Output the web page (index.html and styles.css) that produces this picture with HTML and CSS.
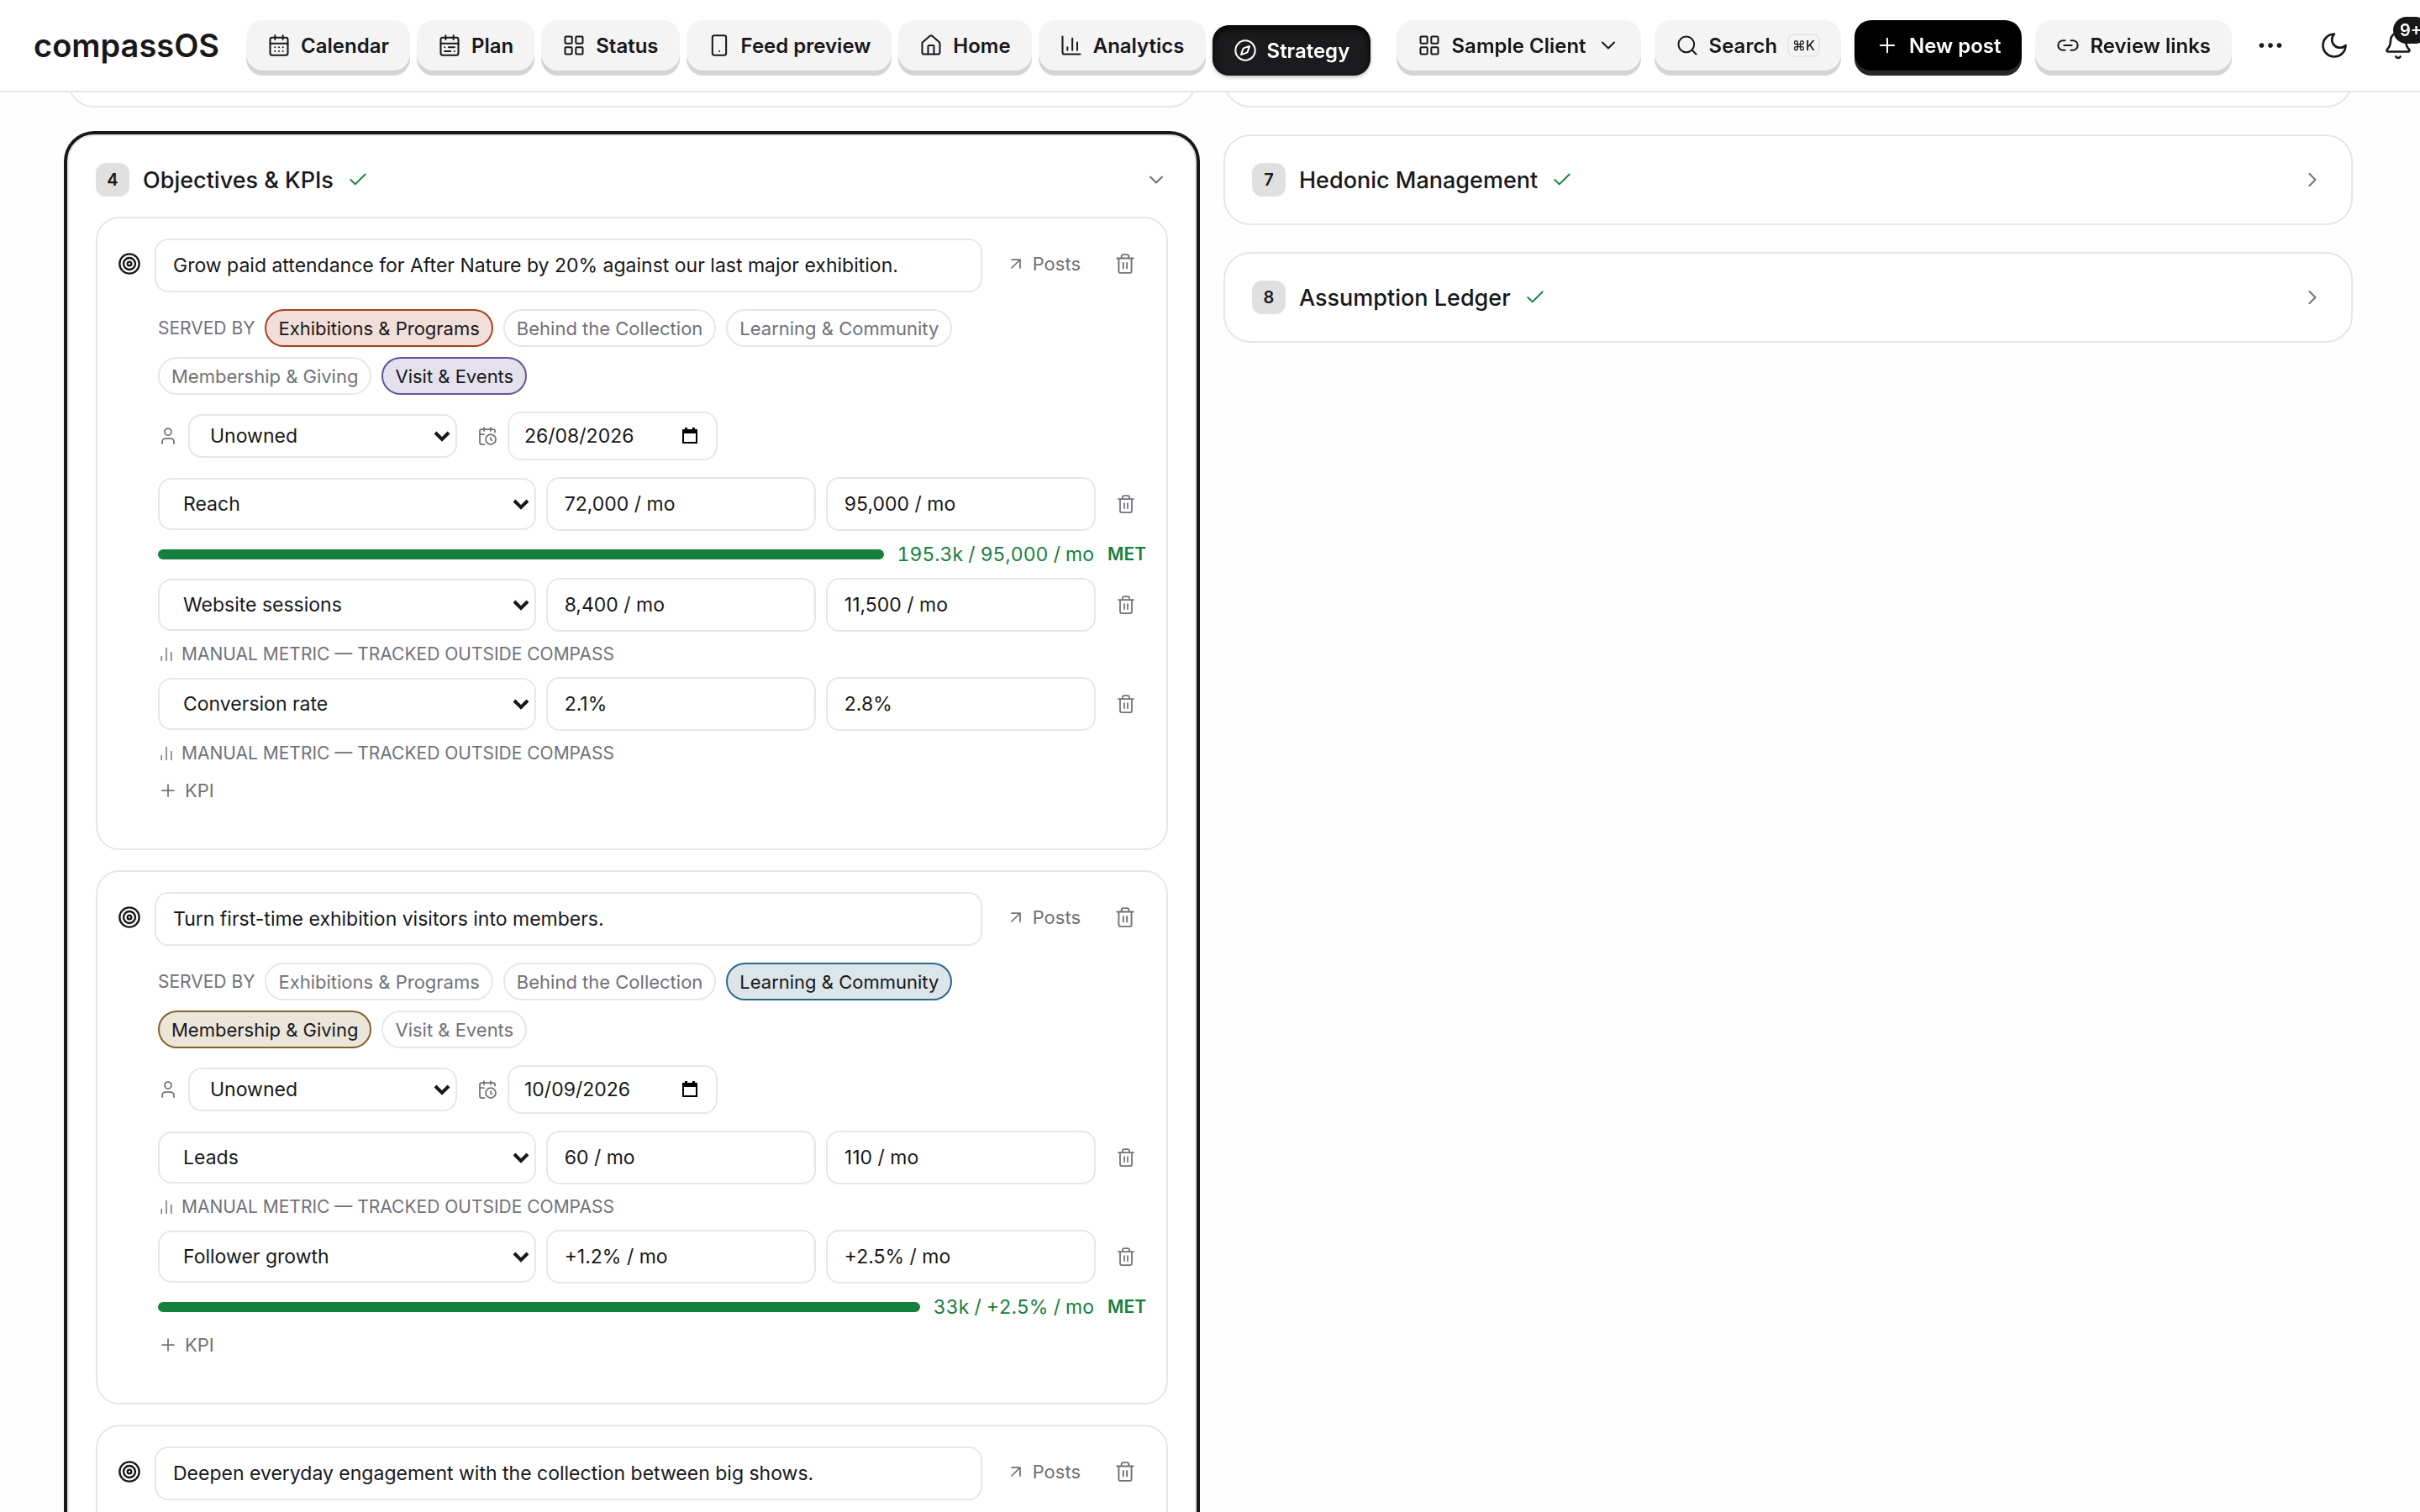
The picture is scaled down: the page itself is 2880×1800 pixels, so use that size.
FILE: index.html
```
<!DOCTYPE html>
<html lang="en">
<head>
  <meta charset="UTF-8" />
  <meta name="viewport" content="width=device-width, initial-scale=1.0"/>
  <title>compassOS - Strategy</title>
  <link rel="stylesheet" href="styles.css">
</head>
<body>
  <!-- icon sprite -->
  <svg class="sprite" aria-hidden="true">
    <symbol id="i-calendar" viewBox="0 0 24 24"><path d="M8 2v4M16 2v4M3 10h18M8 14h.01M12 14h.01M16 14h.01M8 18h.01M12 18h.01M16 18h.01"/><rect x="3" y="4" width="18" height="18" rx="2"/></symbol>
    <symbol id="i-plan" viewBox="0 0 24 24"><path d="M8 2v4M16 2v4M3 10h18M17 14h-6M13 18H7M7 14h.01M17 18h.01"/><rect x="3" y="4" width="18" height="18" rx="2"/></symbol>
    <symbol id="i-grid" viewBox="0 0 24 24"><rect x="3" y="3" width="7" height="7" rx="1"/><rect x="14" y="3" width="7" height="7" rx="1"/><rect x="14" y="14" width="7" height="7" rx="1"/><rect x="3" y="14" width="7" height="7" rx="1"/></symbol>
    <symbol id="i-phone" viewBox="0 0 24 24"><rect x="5" y="2" width="14" height="20" rx="2"/><path d="M12 18h.01"/></symbol>
    <symbol id="i-home" viewBox="0 0 24 24"><path d="M15 21v-8a1 1 0 0 0-1-1h-4a1 1 0 0 0-1 1v8"/><path d="M3 10a2 2 0 0 1 .7-1.5l7-6a2 2 0 0 1 2.6 0l7 6A2 2 0 0 1 21 10v9a2 2 0 0 1-2 2H5a2 2 0 0 1-2-2z"/></symbol>
    <symbol id="i-chart" viewBox="0 0 24 24"><path d="M3 3v16a2 2 0 0 0 2 2h16M18 17V9M13 17V5M8 17v-3"/></symbol>
    <symbol id="i-compass" viewBox="0 0 24 24"><circle cx="12" cy="12" r="10"/><path d="m16.24 7.76-1.8 5.41a2 2 0 0 1-1.27 1.27l-5.41 1.8 1.8-5.41a2 2 0 0 1 1.27-1.27z"/></symbol>
    <symbol id="i-down" viewBox="0 0 24 24"><path d="m6 9 6 6 6-6"/></symbol>
    <symbol id="i-right" viewBox="0 0 24 24"><path d="m9 18 6-6-6-6"/></symbol>
    <symbol id="i-search" viewBox="0 0 24 24"><circle cx="11" cy="11" r="8"/><path d="m21 21-4.3-4.3"/></symbol>
    <symbol id="i-plus" viewBox="0 0 24 24"><path d="M5 12h14M12 5v14"/></symbol>
    <symbol id="i-link" viewBox="0 0 24 24"><path d="M9 17H7A5 5 0 0 1 7 7h2M15 7h2a5 5 0 1 1 0 10h-2M8 12h8"/></symbol>
    <symbol id="i-more" viewBox="0 0 24 24"><circle cx="12" cy="12" r="1"/><circle cx="19" cy="12" r="1"/><circle cx="5" cy="12" r="1"/></symbol>
    <symbol id="i-moon" viewBox="0 0 24 24"><path d="M12 3a6 6 0 0 0 9 9 9 9 0 1 1-9-9Z"/></symbol>
    <symbol id="i-bell" viewBox="0 0 24 24"><path d="M10.27 21a2 2 0 0 0 3.46 0M3.26 15.33A1 1 0 0 0 4 17h16a1 1 0 0 0 .74-1.67C19.41 13.96 18 12.5 18 8A6 6 0 0 0 6 8c0 4.5-1.41 5.96-2.74 7.33"/></symbol>
    <symbol id="i-check" viewBox="0 0 24 24"><path d="M20 6 9 17l-5-5"/></symbol>
    <symbol id="i-target" viewBox="0 0 24 24"><circle cx="12" cy="12" r="10"/><circle cx="12" cy="12" r="6"/><circle cx="12" cy="12" r="2"/></symbol>
    <symbol id="i-arrow" viewBox="0 0 24 24"><path d="M7 7h10v10M7 17 17 7"/></symbol>
    <symbol id="i-trash" viewBox="0 0 24 24"><path d="M10 11v6M14 11v6M19 6v14a2 2 0 0 1-2 2H7a2 2 0 0 1-2-2V6M3 6h18M8 6V4a2 2 0 0 1 2-2h4a2 2 0 0 1 2 2v2"/></symbol>
    <symbol id="i-user" viewBox="0 0 24 24"><path d="M19 21v-2a4 4 0 0 0-4-4H9a4 4 0 0 0-4 4v2"/><circle cx="12" cy="7" r="4"/></symbol>
    <symbol id="i-due" viewBox="0 0 24 24"><path d="M16 14v2.2l1.6 1M16 2v4M21 7.5V6a2 2 0 0 0-2-2H5a2 2 0 0 0-2 2v14a2 2 0 0 0 2 2h3.5M3 10h5M8 2v4"/><circle cx="16" cy="16" r="6"/></symbol>
    <symbol id="i-bars" viewBox="0 0 24 24"><path d="M5 21v-6M12 21V3M19 21V9"/></symbol>
  </svg>

  <header class="topbar">
    <a class="logo" href="#">compassOS</a>
    <nav class="tabs">
      <a class="key" href="#"><svg class="icon"><use href="#i-calendar"/></svg>Calendar</a>
      <a class="key" href="#"><svg class="icon"><use href="#i-plan"/></svg>Plan</a>
      <a class="key" href="#"><svg class="icon"><use href="#i-grid"/></svg>Status</a>
      <a class="key" href="#"><svg class="icon"><use href="#i-phone"/></svg>Feed preview</a>
      <a class="key" href="#"><svg class="icon"><use href="#i-home"/></svg>Home</a>
      <a class="key" href="#"><svg class="icon"><use href="#i-chart"/></svg>Analytics</a>
      <a class="key active" href="#"><svg class="icon"><use href="#i-compass"/></svg>Strategy</a>
    </nav>
    <div class="actions">
      <button class="key"><svg class="icon"><use href="#i-grid"/></svg>Sample Client<svg class="icon"><use href="#i-down"/></svg></button>
      <button class="key"><svg class="icon"><use href="#i-search"/></svg>Search<kbd>⌘K</kbd></button>
      <button class="key primary"><svg class="icon"><use href="#i-plus"/></svg>New post</button>
      <button class="key"><svg class="icon"><use href="#i-link"/></svg>Review links</button>
      <button class="round" aria-label="More"><svg class="icon"><use href="#i-more"/></svg></button>
      <button class="round" aria-label="Dark mode"><svg class="icon"><use href="#i-moon"/></svg></button>
      <button class="round" aria-label="Notifications"><svg class="icon"><use href="#i-bell"/></svg><span class="badge">9+</span></button>
    </div>
  </header>

  <main class="board">
    <div class="column">
      <section class="panel"></section>

      <section class="panel open">
        <button class="panel-head">
          <span class="num">4</span>
          <span class="panel-title">Objectives &amp; KPIs</span>
          <svg class="icon check"><use href="#i-check"/></svg>
          <svg class="icon chevron"><use href="#i-down"/></svg>
        </button>

        <article class="objective">
          <div class="objective-head">
            <svg class="icon target"><use href="#i-target"/></svg>
            <input class="field" type="text" aria-label="Objective" value="Grow paid attendance for After Nature by 20% against our last major exhibition.">
            <a class="posts" href="#"><svg class="icon"><use href="#i-arrow"/></svg>Posts</a>
            <button class="trash" aria-label="Delete objective"><svg class="icon"><use href="#i-trash"/></svg></button>
          </div>
          <div class="objective-body">
            <div class="chips">
              <span class="label">SERVED BY</span>
              <button class="chip rust">Exhibitions &amp; Programs</button>
              <button class="chip">Behind the Collection</button>
              <button class="chip">Learning &amp; Community</button>
              <button class="chip">Membership &amp; Giving</button>
              <button class="chip violet">Visit &amp; Events</button>
            </div>
            <div class="meta">
              <svg class="icon"><use href="#i-user"/></svg>
              <select class="field owner" aria-label="Owner"><option>Unowned</option></select>
              <svg class="icon"><use href="#i-due"/></svg>
              <input class="field date" type="text" aria-label="Due date" value="26/08/2026">
            </div>
            <div class="kpis">
              <div class="kpi">
                <select class="field" aria-label="Metric"><option>Reach</option></select>
                <input class="field" type="text" aria-label="Baseline" value="72,000 / mo">
                <input class="field" type="text" aria-label="Target" value="95,000 / mo">
                <button class="trash" aria-label="Delete KPI"><svg class="icon"><use href="#i-trash"/></svg></button>
              </div>
              <div class="progress"><div class="bar"></div><span class="value">195.3k / 95,000 / mo</span><span class="met">MET</span></div>
              <div class="kpi">
                <select class="field" aria-label="Metric"><option>Website sessions</option></select>
                <input class="field" type="text" aria-label="Baseline" value="8,400 / mo">
                <input class="field" type="text" aria-label="Target" value="11,500 / mo">
                <button class="trash" aria-label="Delete KPI"><svg class="icon"><use href="#i-trash"/></svg></button>
              </div>
              <div class="note"><svg class="icon"><use href="#i-bars"/></svg>MANUAL METRIC — TRACKED OUTSIDE COMPASS</div>
              <div class="kpi">
                <select class="field" aria-label="Metric"><option>Conversion rate</option></select>
                <input class="field" type="text" aria-label="Baseline" value="2.1%">
                <input class="field" type="text" aria-label="Target" value="2.8%">
                <button class="trash" aria-label="Delete KPI"><svg class="icon"><use href="#i-trash"/></svg></button>
              </div>
              <div class="note"><svg class="icon"><use href="#i-bars"/></svg>MANUAL METRIC — TRACKED OUTSIDE COMPASS</div>
              <button class="add"><svg class="icon"><use href="#i-plus"/></svg>KPI</button>
            </div>
          </div>
        </article>

        <article class="objective">
          <div class="objective-head">
            <svg class="icon target"><use href="#i-target"/></svg>
            <input class="field" type="text" aria-label="Objective" value="Turn first-time exhibition visitors into members.">
            <a class="posts" href="#"><svg class="icon"><use href="#i-arrow"/></svg>Posts</a>
            <button class="trash" aria-label="Delete objective"><svg class="icon"><use href="#i-trash"/></svg></button>
          </div>
          <div class="objective-body">
            <div class="chips">
              <span class="label">SERVED BY</span>
              <button class="chip">Exhibitions &amp; Programs</button>
              <button class="chip">Behind the Collection</button>
              <button class="chip teal">Learning &amp; Community</button>
              <button class="chip ochre">Membership &amp; Giving</button>
              <button class="chip">Visit &amp; Events</button>
            </div>
            <div class="meta">
              <svg class="icon"><use href="#i-user"/></svg>
              <select class="field owner" aria-label="Owner"><option>Unowned</option></select>
              <svg class="icon"><use href="#i-due"/></svg>
              <input class="field date" type="text" aria-label="Due date" value="10/09/2026">
            </div>
            <div class="kpis">
              <div class="kpi">
                <select class="field" aria-label="Metric"><option>Leads</option></select>
                <input class="field" type="text" aria-label="Baseline" value="60 / mo">
                <input class="field" type="text" aria-label="Target" value="110 / mo">
                <button class="trash" aria-label="Delete KPI"><svg class="icon"><use href="#i-trash"/></svg></button>
              </div>
              <div class="note"><svg class="icon"><use href="#i-bars"/></svg>MANUAL METRIC — TRACKED OUTSIDE COMPASS</div>
              <div class="kpi">
                <select class="field" aria-label="Metric"><option>Follower growth</option></select>
                <input class="field" type="text" aria-label="Baseline" value="+1.2% / mo">
                <input class="field" type="text" aria-label="Target" value="+2.5% / mo">
                <button class="trash" aria-label="Delete KPI"><svg class="icon"><use href="#i-trash"/></svg></button>
              </div>
              <div class="progress"><div class="bar"></div><span class="value">33k / +2.5% / mo</span><span class="met">MET</span></div>
              <button class="add"><svg class="icon"><use href="#i-plus"/></svg>KPI</button>
            </div>
          </div>
        </article>

        <article class="objective">
          <div class="objective-head">
            <svg class="icon target"><use href="#i-target"/></svg>
            <input class="field" type="text" aria-label="Objective" value="Deepen everyday engagement with the collection between big shows.">
            <a class="posts" href="#"><svg class="icon"><use href="#i-arrow"/></svg>Posts</a>
            <button class="trash" aria-label="Delete objective"><svg class="icon"><use href="#i-trash"/></svg></button>
          </div>
        </article>
      </section>
    </div>

    <div class="column">
      <section class="panel"></section>

      <section class="panel">
        <button class="panel-head">
          <span class="num">7</span>
          <span class="panel-title">Hedonic Management</span>
          <svg class="icon check"><use href="#i-check"/></svg>
          <svg class="icon chevron"><use href="#i-right"/></svg>
        </button>
      </section>

      <section class="panel">
        <button class="panel-head">
          <span class="num">8</span>
          <span class="panel-title">Assumption Ledger</span>
          <svg class="icon check"><use href="#i-check"/></svg>
          <svg class="icon chevron"><use href="#i-right"/></svg>
        </button>
      </section>
    </div>
  </main>
</body>
</html>
```
FILE: styles.css
```
* {
  box-sizing: border-box;
}

body {
  margin: 0;
  height: 100vh;
  overflow: hidden;
  background: #fefefe;
  color: #18181b;
  font-family: Inter, "Liberation Sans", sans-serif;
  font-size: 23px;
}

a {
  color: inherit;
  text-decoration: none;
}

button, input, select {
  margin: 0;
  padding: 0;
  border: none;
  background: none;
  color: inherit;
  font: inherit;
}

button {
  cursor: pointer;
}

.sprite {
  display: none;
}

.icon {
  flex: none;
  width: 24px;
  height: 24px;
  fill: none;
  stroke: currentColor;
  stroke-width: 1.75;
  stroke-linecap: round;
  stroke-linejoin: round;
}

/* top bar */
.topbar {
  position: fixed;
  top: 0;
  left: 0;
  right: 0;
  z-index: 10;
  display: flex;
  align-items: flex-start;
  height: 110px;
  padding: 24px 0 0 40px;
  background: #fff;
  border-bottom: 2px solid #e5e8e6;
  white-space: nowrap;
}

.logo {
  margin-right: 32px;
  font-size: 38px;
  line-height: 60px;
  font-weight: 600;
}

.tabs {
  display: flex;
  gap: 8px;
}

.actions {
  display: flex;
  gap: 16px;
  margin-left: auto;
  margin-right: -4px;
}

.key {
  display: flex;
  align-items: center;
  gap: 12px;
  height: 60px;
  padding: 0 25px;
  border-radius: 20px;
  background: #f4f4f5;
  box-shadow: 0 6px 0 #d4d4d6;
  font-size: 24px;
  font-weight: 600;
}

.key .icon {
  width: 28px;
  height: 28px;
}

.key.active {
  margin-top: 6px;
  background: #1b1b1d;
  color: #fff;
  box-shadow: inset 0 4px 8px #000, 0 2px 4px rgba(0, 0, 0, 0.25);
}

.key.primary {
  background: #000;
  color: #fff;
  box-shadow: 0 6px 0 #27272a;
}

kbd {
  padding: 0 4px;
  border: 2px solid #e5e8e6;
  border-radius: 8px;
  font-family: inherit;
  font-size: 16px;
  line-height: 24px;
  font-weight: 500;
}

.round {
  position: relative;
  display: flex;
  align-items: center;
  justify-content: center;
  width: 60px;
  height: 60px;
}

.round .icon {
  width: 36px;
  height: 36px;
}

.badge {
  position: absolute;
  top: -4px;
  left: 24px;
  min-width: 40px;
  padding: 0 8px;
  border-radius: 16px;
  background: #18181b;
  color: #fff;
  font-size: 20px;
  line-height: 32px;
  font-weight: 600;
}

/* board */
.board {
  display: grid;
  grid-template-columns: 1fr 1fr;
  gap: 32px;
  padding: 20px 80px 0;
}

.column {
  display: flex;
  flex-direction: column;
  gap: 32px;
}

.panel {
  min-height: 108px;
  padding: 32px;
  border: 2px solid #e5e8e6;
  border-radius: 32px;
  background: #fff;
}

.panel.open {
  box-shadow: 0 0 0 4px #18181b;
}

.panel-head {
  display: flex;
  align-items: center;
  gap: 16px;
  width: 100%;
  height: 40px;
}

.num {
  width: 40px;
  border-radius: 12px;
  background: #e0e0e0;
  font-size: 20px;
  line-height: 40px;
  font-weight: 600;
}

.panel-title {
  font-size: 27px;
  font-weight: 500;
}

.check {
  width: 26px;
  height: 26px;
  color: #15803d;
}

.chevron {
  width: 28px;
  height: 28px;
  margin-left: auto;
  color: #71717a;
}

/* objectives */
.objective {
  min-height: 200px;
  margin-top: 24px;
  padding: 24px 24px 52px;
  border: 2px solid #e5e8e6;
  border-radius: 28px;
}

.objective-head {
  display: flex;
  align-items: flex-start;
  gap: 16px;
}

.objective-head .field {
  flex: 1;
}

.target {
  width: 28px;
  height: 60px;
  stroke-width: 2;
}

.field {
  min-width: 0;
  height: 64px;
  padding: 0 20px;
  border: 2px solid #e5e8e6;
  border-radius: 16px;
  background-color: #fff;
}

select.field {
  height: 62px;
  padding: 0 28px;
  appearance: none;
  background-image: url("data:image/svg+xml,%3Csvg xmlns='http://www.w3.org/2000/svg' width='20' height='14'%3E%3Cpath d='M2 3l8 8 8-8' fill='none' stroke='%2318181b' stroke-width='4'/%3E%3C/svg%3E");
  background-repeat: no-repeat;
  background-position: right 6px center;
}

.posts {
  display: flex;
  align-items: center;
  gap: 8px;
  height: 60px;
  padding: 0 12px;
  color: #71717a;
  font-size: 22px;
}

.trash {
  display: flex;
  align-items: center;
  justify-content: center;
  width: 48px;
  height: 48px;
  color: #71717a;
}

.objective-head .trash {
  width: 50px;
  height: 60px;
}

.objective-head .trash .icon {
  width: 26px;
  height: 26px;
}

.objective-body {
  display: flex;
  flex-direction: column;
  gap: 20px;
  margin-top: 20px;
  padding-left: 48px;
}

.chips {
  display: flex;
  flex-wrap: wrap;
  align-items: center;
  gap: 12px;
}

.label {
  color: #71717a;
  font-size: 21px;
}

.chip {
  height: 45px;
  padding: 0 14px;
  border: 2px solid #e5e8e6;
  border-radius: 24px;
  color: #71717a;
  font-size: 22px;
}

.chip.rust {
  border-color: #a8431f;
  background: #f2ded8;
  color: #18181b;
}

.chip.violet {
  border-color: #62559b;
  background: #e4e1ed;
  color: #18181b;
}

.chip.teal {
  border-color: #2b698c;
  background: #dbe5ea;
  color: #18181b;
}

.chip.ochre {
  border-color: #82632b;
  background: #ebe5da;
  color: #18181b;
}

.meta {
  display: flex;
  align-items: center;
  gap: 12px;
  color: #71717a;
}

.meta .field {
  color: #18181b;
}

.meta .owner {
  width: 320px;
  height: 52px;
  margin-right: 12px;
  padding: 0 24px;
}

.meta .date {
  width: 250px;
  height: 58px;
  padding: 0 18px;
  background-image: url("data:image/svg+xml,%3Csvg xmlns='http://www.w3.org/2000/svg' width='18' height='20'%3E%3Cpath d='M1 4h16v14H1z' fill='none' stroke='%23000' stroke-width='2'/%3E%3Cpath d='M0 2h18v5H0zM3 0h3v3H3zM12 0h3v3h-3z'/%3E%3C/svg%3E");
  background-repeat: no-repeat;
  background-position: right 22px center;
}

/* KPI rows */
.kpis {
  display: flex;
  flex-direction: column;
  gap: 12px;
}

.kpi {
  display: grid;
  grid-template-columns: 1.4fr 1fr 1fr 48px;
  align-items: center;
  gap: 12px;
}

.progress {
  display: flex;
  align-items: center;
  gap: 16px;
  color: #15803d;
  line-height: 32px;
}

.bar {
  flex: 1;
  height: 12px;
  border-radius: 6px;
  background: #15803d;
}

.value {
  font-variant-numeric: tabular-nums;
}

.met {
  font-size: 21px;
  font-weight: 600;
}

.note {
  display: flex;
  align-items: center;
  gap: 8px;
  color: #71717a;
  font-size: 21px;
  line-height: 30px;
}

.note .icon {
  width: 20px;
  height: 20px;
}

.add {
  display: flex;
  align-items: center;
  gap: 8px;
  height: 34px;
  color: #71717a;
  font-size: 22px;
}
```
